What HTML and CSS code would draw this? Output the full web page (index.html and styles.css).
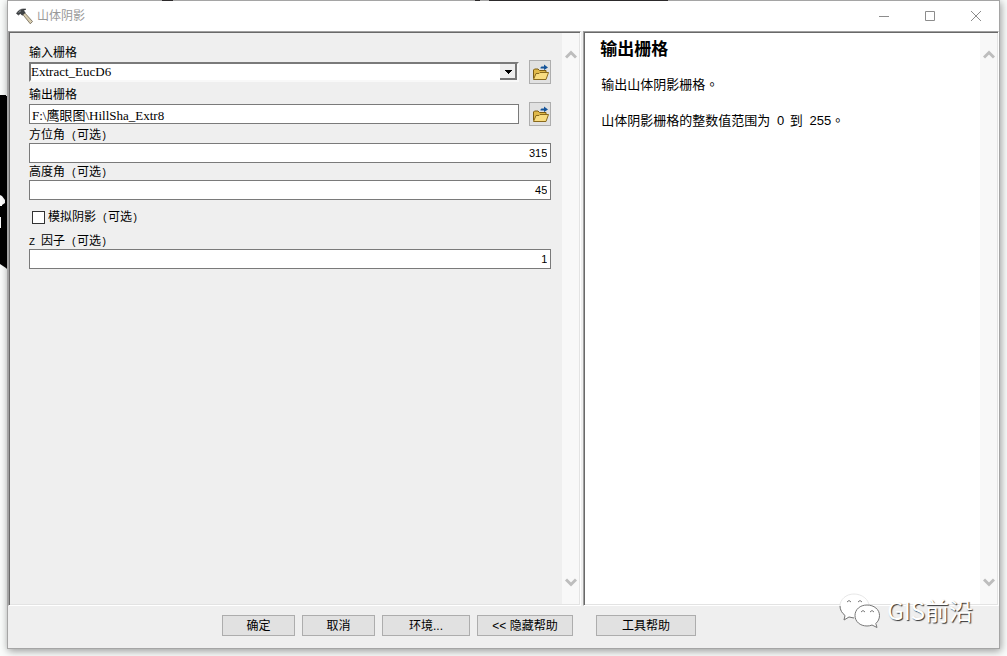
FILE: index.html
```html
<!DOCTYPE html>
<html lang="zh-CN">
<head>
<meta charset="utf-8">
<title>山体阴影</title>
<link rel="stylesheet" href="styles.css">
</head>
<body>
<svg class="backdrop" width="8" height="176" viewBox="0 0 8 176" aria-hidden="true">
  <path d="M0 0H6V1H8V175L6 173 0 169Z" fill="#000"/>
  <path d="M0 100l2 1 3 4v3l-3 2v1H0zM0 122h1v11H0z" fill="#fff"/>
</svg>
<div class="window">
  <span class="edge edge-short"></span>
  <span class="edge edge-dot"></span>
  <span class="edge edge-long"></span>
  <header class="titlebar">
    <svg width="17" height="17" viewBox="0 0 17 17" aria-hidden="true">
      <path d="M6 5.500L8 4l8.500 9.500-2.200 2.300z" fill="#d8cdb0" stroke="#6d6553" stroke-width=".8"/>
      <path d="M.5 5.500C2.500 2 5.500.4 10 1.200L7.500 2.400l1.700 2.300-3.100 2.600-1.700-1.900L2.500 7z" fill="#3f4244" stroke="#2c2e30" stroke-width=".6"/>
      <path d="M2.500 4.500L5 2.700" stroke="#a5abad" stroke-width=".8"/>
    </svg>
    <h1>山体阴影</h1>
    <div class="controls">
      <button aria-label="最小化"><svg width="10" height="10" viewBox="0 0 10 10"><path d="M0 5.500h10"/></svg></button>
      <button aria-label="最大化"><svg width="10" height="10" viewBox="0 0 10 10"><path d="M.5.5h9v9h-9z"/></svg></button>
      <button aria-label="关闭"><svg width="10" height="10" viewBox="0 0 10 10"><path d="M0 0l10 10M10 0L0 10"/></svg></button>
    </div>
  </header>
  <main class="panels">
    <section class="panel panel-form">
      <form class="form">
        <div class="file-row">
          <div class="field">
            <label for="in-raster">输入栅格</label>
            <select id="in-raster"><option>Extract_EucD6</option></select>
          </div>
          <button type="button" class="browse" aria-label="浏览输入栅格">
            <svg width="17" height="17" viewBox="0 0 17 17"><path d="M1.500 14.500V6l1-1H6l1.500 1.500H14V9" fill="#e0b94a" stroke="#7b5c12"/><path d="M1.500 15.500L4 9.500h3l1-1h8.500L14 15.500z" fill="#f8dc80" stroke="#8a6a1c"/><path d="M8.500 4.500V3.500l1-1H12V.5L16 3.500 12 6V4.500z" fill="#15549a"/></svg>
          </button>
        </div>
        <div class="file-row">
          <div class="field">
            <label for="out-raster">输出栅格</label>
            <input id="out-raster" type="text" value="F:\鹰眼图\HillSha_Extr8">
          </div>
          <button type="button" class="browse" aria-label="浏览输出栅格">
            <svg width="17" height="17" viewBox="0 0 17 17"><path d="M1.500 14.500V6l1-1H6l1.500 1.500H14V9" fill="#e0b94a" stroke="#7b5c12"/><path d="M1.500 15.500L4 9.500h3l1-1h8.500L14 15.500z" fill="#f8dc80" stroke="#8a6a1c"/><path d="M8.500 4.500V3.500l1-1H12V.5L16 3.500 12 6V4.500z" fill="#15549a"/></svg>
          </button>
        </div>
        <div class="number-row">
          <label for="azimuth">方位角<span class="half"> (</span>可选<span class="half">)</span></label>
          <input id="azimuth" class="number" type="text" value="315">
        </div>
        <div class="number-row">
          <label for="altitude">高度角<span class="half"> (</span>可选<span class="half">)</span></label>
          <input id="altitude" class="number" type="text" value="45">
        </div>
        <div class="check-row">
          <input id="shadows" type="checkbox">
          <label for="shadows">模拟阴影<span class="half"> (</span>可选<span class="half">)</span></label>
        </div>
        <div class="number-row">
          <label for="z-factor"><span class="half">Z </span>因子<span class="half"> (</span>可选<span class="half">)</span></label>
          <input id="z-factor" class="number" type="text" value="1">
        </div>
      </form>
      <div class="scrollbar">
        <svg width="12" height="9" viewBox="0 0 12 9"><path d="M1 7.500l5-5 5 5"/></svg>
        <svg width="12" height="9" viewBox="0 0 12 9"><path d="M1 1.500l5 5 5-5"/></svg>
      </div>
    </section>
    <section class="panel panel-help">
      <article class="help">
        <h2>输出栅格</h2>
        <p>输出山体阴影栅格<span class="stop" lang="zh-Hant">。</span></p>
        <p>山体阴影栅格的整数值范围为 <span class="value">0</span> 到 <span class="value">255</span><span class="stop" lang="zh-Hant">。</span></p>
      </article>
      <div class="scrollbar">
        <svg width="12" height="9" viewBox="0 0 12 9"><path d="M1 7.500l5-5 5 5"/></svg>
        <svg width="12" height="9" viewBox="0 0 12 9"><path d="M1 1.500l5 5 5-5"/></svg>
      </div>
    </section>
  </main>
  <footer class="actions">
    <button class="w-small">确定</button>
    <button class="w-small">取消</button>
    <button class="w-medium">环境...</button>
    <button class="w-large">&lt;&lt; 隐藏帮助</button>
    <button class="w-tool">工具帮助</button>
  </footer>
  <div class="watermark">
    <svg width="42" height="36" viewBox="0 0 42 36" aria-hidden="true">
      <path d="M15 2C7 2 1 7.500 1 14c0 4 2 7 5 9.500L5 28l5-3c2 .7 4 1 6 1 8 0 14-5.500 14-12S23 2 15 2z" fill="#fff" stroke="#ddd" stroke-width=".7"/>
      <path d="M1 14c0 4 2 7 5 9.500L5 28l5-3 5 1" fill="none" stroke="#777"/>
      <path d="M28 13c-7 0-12 4.500-12 10.500S21 34 28 34c2 0 3.500-.3 5-1l5 2.500-1.200-4C39 29.500 40.500 27 40.500 23.500 40.500 17.500 35 13 28 13z" fill="#fff" stroke="#777"/>
      <path d="M8 10q2-3 4 0M19 10q2-3 4 0M22 20q2-3 4 0M31 20q2-3 4 0" fill="none" stroke="#777"/>
    </svg>
    <span>GIS前沿</span>
  </div>
</div>
</body>
</html>
```
FILE: styles.css
```css
* { box-sizing: border-box; }
body {
  margin: 0;
  min-height: 100vh;
  display: flex;
  flex-direction: column;
  padding: 0 7px 7px;
  background: #fafcfb;
  color: #000;
  font: 12px/16px "Liberation Sans", "Noto Sans CJK SC", sans-serif;
  overflow: hidden;
}
h1, h2, p { margin: 0; font-weight: normal; }
button, input, select { font: inherit; color: inherit; margin: 0; border-radius: 0; }
.backdrop { position: absolute; left: 0; top: 95px; }
.window {
  position: relative;
  flex: 1;
  display: flex;
  flex-direction: column;
  background: #efefef;
  border: 1px solid #a5a5a5;
  box-shadow: 1px 2px 8px rgba(0, 0, 0, .4);
}
.edge { position: absolute; top: -1px; height: 1px; background: #2c2a2b; }
.edge-short { left: 154px; width: 11px; }
.edge-dot { left: 467px; width: 5px; }
.edge-long { left: 481px; width: 179px; }

.titlebar {
  display: flex;
  align-items: center;
  height: 30px;
  padding-left: 8px;
  background: #fff;
}
.titlebar h1 {
  flex: 1;
  margin-left: 4px;
  font-size: 12px;
  color: #999;
}
.controls { display: flex; }
.controls button {
  width: 46px;
  height: 29px;
  padding: 0;
  border: 0;
  background: none;
}
.controls svg { display: block; margin: auto; fill: none; stroke: #8c8c8c; }

.panels { flex: 1; display: flex; gap: 2px; }
.panel {
  display: flex;
  min-width: 0;
  border: 1px solid;
  border-color: #a0a0a0 #fff #fff #a0a0a0;
  box-shadow: inset 1px 1px #696969, inset -1px -1px #e3e3e3;
  padding: 1px;
}
.panel-form { flex: 574 1 0; }
.panel-help { flex: 415 1 0; background: #fff; background-clip: padding-box; }
.scrollbar {
  width: 17px;
  flex: none;
  display: flex;
  flex-direction: column;
  justify-content: space-between;
  align-items: center;
  padding: 17px 0;
  background: #f8f8f8;
}
.scrollbar svg { fill: none; stroke: #bdbdbd; stroke-width: 3; }

.form { flex: 1; min-width: 0; padding: 11px 11px 0 19px; }
.form label { display: block; }
.half { font: 10px/1 "Liberation Mono", monospace; white-space: pre; }
.file-row { display: flex; align-items: flex-end; gap: 10px; margin-bottom: 2px; }
.file-row:nth-child(2) { margin-bottom: 1px; }
.field { flex: 1; min-width: 0; padding-bottom: 2px; }
.field label { line-height: 18px; }
.form input[type="text"], .form select {
  display: block;
  width: 100%;
  height: 20px;
  background: #fff;
  border: 1px solid #7a7a7a;
  padding: 0 2px;
  font-family: "Liberation Serif", "Noto Sans CJK SC", serif;
  font-size: 13px;
}
.form select {
  appearance: none;
  border: 2px solid;
  border-color: #7a7a7a #f8f8f8 #f8f8f8 #7a7a7a;
  padding: 0;
  line-height: 14px;
  background:
    linear-gradient(#000, #000) right 5px top 6px / 7px 1px no-repeat,
    linear-gradient(#000, #000) right 6px top 7px / 5px 1px no-repeat,
    linear-gradient(#000, #000) right 7px top 8px / 3px 1px no-repeat,
    linear-gradient(#000, #000) right 8px top 9px / 1px 1px no-repeat,
    linear-gradient(#efefef, #efefef) right 2px top 0 / 15px 14px no-repeat,
    linear-gradient(#777, #777) right 0 top 0 / 17px 16px no-repeat,
    #fff;
}
.browse {
  width: 22px;
  height: 24px;
  flex: none;
  display: grid;
  place-items: center;
  padding: 0;
  background: #e1e1e1;
  border: 1px solid #adadad;
}
.number-row { margin-bottom: 1px; }
.form input.number {
  padding: 0 3px 1px;
  text-align: right;
  font-family: "Liberation Sans", sans-serif;
  font-size: 11px;
}
.check-row { display: flex; align-items: center; gap: 3px; height: 32px; padding-left: 3px; }
.check-row input {
  appearance: none;
  width: 13px;
  height: 13px;
  background: #fff;
  border: 1px solid #333;
}

.help {
  flex: 1;
  padding: 6px 15px;
  font-size: 13px;
  line-height: 18px;
}
.help h2 { font-size: 17px; line-height: 22px; font-weight: bold; margin-bottom: 15px; }
.help p { margin: 0 0 18px 1px; }
.value { margin: 0 2px 0 3px; }
.stop { font-family: "Noto Sans CJK TC", sans-serif; line-height: 1; }
.value + .stop { margin-left: -2px; }

.actions { display: flex; flex-wrap: wrap; gap: 7px; padding: 9px 0 12px 214px; }
.actions button {
  height: 21px;
  padding: 1px 0 0;
  background: #e1e1e1;
  border: 1px solid #adadad;
  line-height: 16px;
}
.w-small { width: 73px; }
.w-medium { width: 88px; }
.w-large { width: 96px; }
.w-tool { width: 100px; margin-left: 16px; }

.watermark {
  position: absolute;
  right: 26px;
  bottom: 20px;
  display: flex;
  align-items: center;
  gap: 6px;
  color: #fff;
  font: 24px/36px "Noto Sans CJK SC", sans-serif;
  text-shadow: 1px 1px 1px #333;
}
```
